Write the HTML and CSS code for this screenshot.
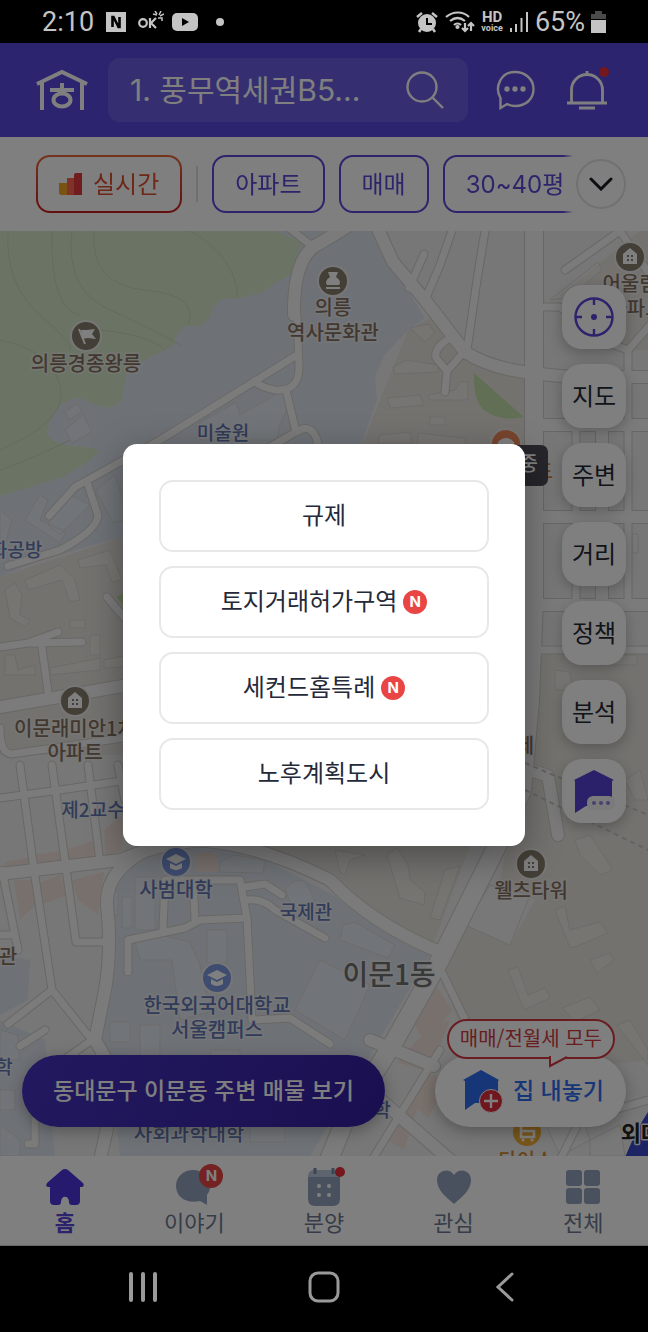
FILE: index.html
```html
<!DOCTYPE html>
<html lang="ko">
<head>
	<meta charset="UTF-8">
	<meta name="viewport" content="width=device-width, initial-scale=1">
	<title>이문동 지도</title>
	<link rel="stylesheet" href="styles.css">
</head>
<body>
	<div class="status">
		<div class="status-left">
			<span class="clock">2:10</span>
			<svg width="20" height="20" viewBox="0 0 20 20"><rect width="20" height="20" fill="#c4c4c4"/><path d="M6.500 15V5h1l5 10h1V5" fill="none" stroke="#000" stroke-width="2.600"/></svg>
			<svg class="ok" width="26" height="22" viewBox="0 0 26 22" fill="none" stroke="#c4c4c4" stroke-width="2.200"><circle cx="5" cy="12" r="3.800"/><path d="M12 7v10M18 7l-5 5 5 5"/><path d="M15 3l4 1M17 0l2 3M23 0l-2 4M26 3l-4 2M20 7h4v3" stroke-width="1.500"/></svg>
			<svg width="26" height="18" viewBox="0 0 26 18"><rect width="26" height="18" rx="5" fill="#c4c4c4"/><path d="M10 5v8l7-4z" fill="#000"/></svg>
			<i class="dot"></i>
		</div>
		<div class="status-right">
			<svg width="24" height="22" viewBox="0 0 24 22"><circle cx="12" cy="12" r="9" fill="#c4c4c4"/><path d="M2 6l5-4M22 6l-5-4M6 18l-2 3M18 18l2 3" stroke="#c4c4c4" stroke-width="2.500"/><path d="M12 7v6h5" fill="none" stroke="#000" stroke-width="2"/></svg>
			<svg width="30" height="22" viewBox="0 0 30 22" fill="none" stroke="#c4c4c4" stroke-width="2.200"><path d="M1 6c7-6 17-6 23 0M5 10c5-4 10-4 15 0M9 14c2-2 5-2 7 0M20 12v8M17 17l3 3 3-3M26 20v-8M23 15l3-3 3 3"/><circle cx="12.500" cy="16" r="1"/></svg>
			<span class="hd"><b>HD</b><small>voice</small></span>
			<svg width="20" height="20" viewBox="0 0 20 20" stroke="#c4c4c4" stroke-width="2"><path d="M2 20v-4M7 20v-8M12.500 20V6M18 20V0"/></svg>
			<span class="battery">65%</span>
			<svg width="15" height="22" viewBox="0 0 15 22"><path d="M4 0h7v3h4v5H0V3h4z" fill="#4b4b4b"/><path d="M0 9h15v13H0z" fill="#c4c4c4"/></svg>
		</div>
	</div>

	<div class="app">
		<header class="header">
			<a href="#" class="icon-link" aria-label="홈으로">
				<svg width="52" height="42" viewBox="0 0 52 42" fill="none" stroke="#fff" stroke-width="4"><path d="M1 15L26 3l25 12M6 13v28M46 13v28M26 14v6M14 21h24" /><ellipse cx="26" cy="31" rx="8.500" ry="6.500"/></svg>
			</a>
			<button class="search">
				<span>1. 풍무역세권B5...</span>
				<svg width="38" height="38" viewBox="0 0 38 38" fill="none" stroke="#fff" stroke-width="2.400"><circle cx="16" cy="16" r="14.500"/><path d="M26 26l11 11"/></svg>
			</button>
			<button class="icon-btn" aria-label="채팅">
				<svg width="40" height="40" viewBox="0 0 40 40" fill="none" stroke="#fff" stroke-width="2.400"><path d="M5.500 38V28C-1 17 6 2 20 2c10 0 18.500 7 18.500 17S31 36 20 36c-3 0-6-1-8-2z"/><g fill="#fff" stroke="none"><circle cx="12" cy="19" r="2.700"/><circle cx="20" cy="19" r="2.700"/><circle cx="28" cy="19" r="2.700"/></g></svg>
			</button>
			<button class="icon-btn bell" aria-label="알림">
				<svg width="40" height="40" viewBox="0 0 40 40" fill="none" stroke="#fff" stroke-width="2.800"><path d="M0 33h40M4.500 33V20a15.500 15.500 0 0 1 31 0v13M20 5V1M12 38h16"/></svg>
				<i class="red-dot"></i>
			</button>
		</header>

		<nav class="filters">
			<div class="chips">
				<button class="chip live">
					<svg width="24" height="24" viewBox="0 0 24 24"><path d="M0 11h8v12H2a2 2 0 0 1-2-2z" fill="#f5a523"/><path d="M8 6h8v17H8z" fill="#ff6650"/><path d="M15 3a2 2 0 0 1 2-2h6v22h-8z" fill="#e53a3a"/></svg>
					실시간
				</button>
				<i class="bar"></i>
				<button class="chip">아파트</button>
				<button class="chip">매매</button>
				<button class="chip">30~40평</button>
			</div>
			<button class="more" aria-label="필터 더보기">
				<svg width="24" height="14" viewBox="0 0 24 14" fill="none" stroke="#1a1c22" stroke-width="3" stroke-linecap="round"><path d="M2 2l10 10L22 2"/></svg>
			</button>
		</nav>

		<main class="map">
			<svg class="map-canvas" viewBox="0 231 648 925" preserveAspectRatio="xMidYMin slice">
				<defs>
					<g id="wide">
						<path d="M534 220V600L530 700L522 790L495 850L440 960L395 1040L345 1120L325 1170"/>
					</g>
					<g id="mid">
						<path d="M376 225L393 262L425 300L465 352Q490 368 530 373L570 377H650"/>
						<path d="M350 225L320 243Q293 255 294 315"/>
						<path d="M0 707L123 686M0 874L60 867L120 860Q170 840 205 841Q260 845 330 880Q370 922 435 950"/>
						<path d="M150 848Q105 870 107 905Q112 950 105 990L95 1040L118 1080L100 1160"/>
						<path d="M542 425H650M542 517H650M542 605H650M602 425V605"/>
						<path d="M525 768L548 776L558 835M434 1066L370 1040M352 1075L450 1160"/>
					</g>
					<g id="thin">
						<path d="M285 225L312 246M297 315L299 365Q300 392 275 390Q260 387 254 381M297 355L160 440L75 487L49 516M286 390L296 432L268 448M296 432Q315 420 319 450"/>
						<path d="M88 485L98 515Q98 530 60 550L8 566"/>
						<path d="M409 288L424 254M425 300L440 265L454 225M467 350L477 280L486 225"/>
						<path d="M463 353L447 371L436 358Q434 348 447 340M447 371L445 392"/>
						<path d="M542 307H560L600 340L628 350L650 325M565 270L620 231L650 275M628 350V605M576 425V605M542 650H650"/>
						<path d="M0 647L28 643L82 642M28 643L58 632M41 640L48 692M107 597L128 622M0 728Q0 754 12 754L123 738"/>
						<path d="M20 765L34 870L52 990L8 1024M52 990L92 1040L30 1084M52 765L76 942H108M88 765L100 862M118 765L125 800M0 798L60 790L128 780M2 870L18 950M0 935H15"/>
						<path d="M45 1030L20 1046M35 1090V1144L28 1144"/>
						<path d="M128 972V940L185 928L200 920L247 918M165 880L163 928M193 880L195 920M165 880H240L247 918L252 1020L290 1018L330 1044M245 887L265 884L282 895M247 900Q262 898 275 910L325 938"/>
						<path d="M440 968L470 1030L520 1060M648 1100L580 1120L560 1160M372 1160L440 1050"/>
					</g>
					<g id="pin-apt"><circle r="15"/><path d="M-7-3L0-9L7-3V7H-7z" fill="#fff" stroke="none"/><path d="M-3-2h2v2h-2zM1-2h2v2h-2zM-3 2h2v2h-2zM1 2h2v2h-2z" stroke="none"/></g>
					<g id="pin-school"><circle r="15"/><path d="M-10-3L0-8L10-3L0 2zM-6 1v5q6 4 12 0V1L0 4z" fill="#fff" stroke="none"/></g>
				</defs>

				<rect y="231" width="648" height="925" fill="#eeeeee"/>
				<!-- housing blocks -->
				<g fill="#e9e5df">
					<path d="M408 330L430 318L465 352L527 378V450H360zM0 577L123 537V755H0zM560 295L640 231H648V350H600z"/>
					<path d="M540 655L648 650V1060L560 1070L470 1050L442 980L465 925L510 945L535 900L500 880z"/>
					<path d="M240 846H470L432 948L370 915L330 880z"/>
				</g>
				<!-- campus -->
				<g fill="#dde4ee">
					<path d="M0 231H374L393 266L425 318L408 330L385 355L375 375L377 400L362 443L123 537L40 560L0 577z"/>
					<path d="M165 846Q112 868 110 905L114 940L100 1040L112 1080L120 1156H310L430 955L375 925L330 893L250 852z"/>
					<path d="M0 955L30 960L28 1000L0 1015zM0 1020L45 1040L55 1156H0z"/>
				</g>
				<!-- hills -->
				<path fill="#d7e8c8" d="M0 231H277L302 243L290 275L272 285L262 293L240 298L222 299L213 307L210 318L200 326H185L177 335L172 347L150 357L127 370L122 400Q110 412 95 405L78 397L62 404Q48 415 48 435Q55 446 85 447L100 450Q90 463 60 478L0 496z"/>
				<g fill="none" stroke="#c7d8b9" stroke-width="1">
					<path d="M8 231Q5 285 40 315T70 350M52 231Q50 310 80 315M72 231Q65 290 110 310T180 345M94 231Q90 285 145 290T188 325M190 231Q235 255 238 298M0 340Q50 350 60 385T0 450M100 330Q150 335 165 350M0 470Q30 460 70 440"/>
				</g>
				<path fill="#c3dfab" d="M474 373L524 417Q500 422 484 410Q473 400 474 373zM116 597L123 593V605z"/>
				<!-- shops -->
				<g fill="#f1e1d8">
					<path d="M5 862L60 852L55 864L5 870zM35 855L78 848L80 862L38 866zM65 850L95 840L97 858L68 862zM104 830L122 815V850L106 857zM14 880H38L40 900L20 920zM35 885L60 875L68 895L40 905zM72 880L104 872L98 915L78 900zM195 853L218 852V872H195z"/>
					<path d="M435 985L453 1010L425 1043L415 1025zM427 1030L450 1020L430 1072L397 1062zM405 1105L420 1100L404 1150L388 1140zM425 1072L450 1080L428 1118L410 1102z"/>
				</g>
				<!-- buildings -->
				<g class="buildings">
					<path d="M65 412L78 403L82 412L69 420zM65 430L83 415L92 432L72 443zM196 425L236 402L240 415L275 395L280 390L290 402L280 425L277 440H200z"/>
					<path d="M0 510L12 520L5 545H0zM25 520L40 495L48 500L40 520L66 532L60 543zM60 505L70 495L90 505L80 515L60 535L48 525zM96 490L115 475L123 500V520L113 523z"/>
					<path d="M25 580L60 565L75 580L80 600L70 602L62 580L28 590zM78 560L110 550L122 580L112 582L106 565L80 568zM5 590L15 583L22 595L20 615L30 620L25 627L10 618zM70 620H85V628H70zM90 635H100V655H90zM50 668L100 658V670L50 675zM104 660L123 656V667L104 668zM5 655H15L18 670L35 665V675H5z"/>
					<path d="M393 367L407 360L438 365V372L395 374zM387 398L420 395L424 405L390 408zM428 395L455 390L460 382H468V400H430zM430 417H445V425H430zM380 435L410 432L412 443H378zM418 433L465 438V445H418zM410 328L428 324L435 332L425 342z"/>
					<path d="M135 877H155V930H135zM110 895L118 890V915H110zM122 897H132V928H122zM220 862L235 855L265 860L263 873L220 872zM285 890Q300 870 310 890T305 910Q292 912 285 890z"/>
					<path d="M135 942L165 936L190 942L200 965L205 990L215 1010L180 1020L172 960L140 960zM207 930H227V963H207zM320 960L370 985L345 1040L295 1010zM343 925L355 922L395 945L388 958L340 940zM110 1022H130V1042H110zM140 1025H160V1060H140zM210 1050H240V1070H210z"/>
					<path d="M387 855L397 848L408 865L410 880L425 892L424 905L400 898zM335 850L365 855L350 860L345 875L340 872zM445 870L460 866L440 920L430 918zM490 885L530 895L510 945L465 925zM555 910L565 906L570 930L600 922L608 933L580 945L570 948z"/>
					<path d="M575 840L590 835L610 865L612 870L600 875L580 855zM508 970L518 967L528 995L545 988L550 998L524 1010zM562 1008L590 997L600 1010L575 1022zM617 1025L630 1020L648 1050V1065zM625 780L640 770L648 800H635zM590 960L610 953L614 960L597 973zM555 670L570 672L573 690H555zM600 655H637V665H600zM632 534H638V553H632zM620 245L648 258V275zM550 300L598 262L602 270L570 297z"/>
					<path d="M0 1030L18 1035L20 1060H0zM0 1090H15V1110H0zM0 1125L20 1140V1156H0zM250 1120L285 1125V1142H250zM545 1122L580 1110L590 1140L560 1156zM500 1080L530 1095L515 1120zM590 1140L620 1125L625 1156H590z"/>
				</g>

				<g class="casing">
					<use href="#thin" class="thin"/>
					<use href="#mid" class="mid"/>
					<use href="#wide" class="wide"/>
				</g>
				<g class="road">
					<use href="#thin" class="thin"/>
					<use href="#mid" class="mid"/>
					<use href="#wide" class="wide"/>
				</g>
				<path d="M525 763L648 815M525 790L648 850" fill="none" stroke="#c9c7c4" stroke-width="2" stroke-dasharray="5 4"/>
				<path d="M624 1160Q636 1130 648 1112V1160z" fill="#3a48c8"/>

				<g class="label brown">
					<text x="86" y="371">의릉경종왕릉</text>
					<text x="333" y="315">의릉</text>
					<text x="333" y="340">역사문화관</text>
					<text x="75" y="736">이문래미안1차</text>
					<text x="75" y="760">아파트</text>
					<text x="531" y="898">웰츠타워</text>
					<text x="630" y="291">어울림</text>
					<text x="636" y="316">아파트</text>
					<text x="525" y="753">제</text>
					<text x="8" y="964">관</text>
				</g>
				<g class="label blue">
					<text x="223" y="440">미술원</text>
					<text x="16" y="557">화공방</text>
					<text x="93" y="817">제2교수</text>
					<text x="306" y="919">국제관</text>
					<text x="4" y="1074">학</text>
					<text x="382" y="1117">학</text>
				</g>
				<g class="label blue big">
					<text x="176" y="897">사범대학</text>
					<text x="217" y="1013">한국외국어대학교</text>
					<text x="217" y="1037">서울캠퍼스</text>
					<text x="189" y="1141">사회과학대학</text>
				</g>
				<g class="label orange">
					<text x="544" y="479">드</text>
					<text x="526" y="1168">다이소</text>
				</g>
				<text class="label town" x="389" y="985">이문1동</text>
				<text class="label station" x="641" y="1141">외대</text>

				<g class="pin pin-brown">
					<g transform="translate(86 336)"><circle r="15"/><path d="M-7-7L-1 8" fill="none" stroke="#fff"/><path d="M-5-6h6l8-1-3 5 4 5-8-1-6 1z" fill="#fff" stroke="none"/></g>
					<g transform="translate(333 281)"><circle r="15"/><path d="M-5-9H5L3-4Q9 0 6 4H-6Q-9 0-3-4zM-7 6H7V8H-7z" fill="#fff" stroke="none"/></g>
					<use href="#pin-apt" x="75" y="701"/>
					<use href="#pin-apt" x="630" y="257"/>
					<use href="#pin-apt" x="531" y="864"/>
				</g>
				<g class="pin pin-blue">
					<use href="#pin-school" x="176" y="862"/>
					<use href="#pin-school" x="217" y="978"/>
				</g>
				<g class="pin pin-orange"><circle cx="506" cy="444" r="15"/><path d="M498 442q8-8 16 0v6h-16z" fill="#fff" stroke="none"/></g>
				<g class="pin pin-yellow"><circle cx="527" cy="1132" r="15"/><path d="M518 1123h3v14h13v-6h-12" fill="none" stroke="#fff" stroke-width="2.500"/><circle cx="523" cy="1140" r="1.500" fill="#fff" stroke="none"/><circle cx="532" cy="1140" r="1.500" fill="#fff" stroke="none"/></g>
				<rect x="464" y="445" width="84" height="41" rx="7" fill="#4b4b56"/>
				<text class="tip" x="538" y="471">분양중</text>
			</svg>

			<div class="side">
				<button aria-label="현재 위치"><svg width="40" height="40" viewBox="0 0 40 40" fill="none" stroke="#5a44d8" stroke-width="2.400"><circle cx="20" cy="20" r="18.500"/><path d="M20 2v6M20 32v6M2 20h6M32 20h6"/><circle cx="20" cy="20" r="3" fill="#5a44d8" stroke="none"/></svg></button>
				<button class="word">지도</button>
				<button class="word">주변</button>
				<button class="word">거리</button>
				<button class="word">정책</button>
				<button class="word">분석</button>
				<button aria-label="상담"><svg width="44" height="46" viewBox="0 0 44 46"><path d="M2 12L22 2l20 10-2 1v25H14L3 45V13z" fill="#5640d4"/><rect x="15" y="28" width="28" height="14" rx="6" fill="#f4f4fa"/><g fill="#8f84d8"><circle cx="22" cy="35" r="2"/><circle cx="29" cy="35" r="2"/><circle cx="36" cy="35" r="2"/></g></svg></button>
			</div>

			<div class="bottom">
				<button class="nearby">동대문구 이문동 주변 매물 보기</button>
				<div class="sell-wrap">
					<button class="sell">
						<svg width="40" height="44" viewBox="0 0 40 44"><path d="M0 11L18 1l18 10-1 1v22H12L2 41V12z" fill="#2f6df0"/><circle cx="28" cy="32" r="11.500" fill="#e02c3c" stroke="#fff" stroke-width="1"/><path d="M28 25v14M21 32h14" stroke="#fff" stroke-width="2.400"/></svg>
						<span>집 내놓기</span>
					</button>
					<div class="bubble">매매/전월세 모두<svg width="20" height="12" viewBox="0 0 20 12"><path d="M1 0v10L18 1" fill="#fff" stroke="#d53a40" stroke-width="2"/></svg></div>
				</div>
			</div>
		</main>

		<nav class="tabs">
			<a href="#" class="on">
				<svg width="40" height="38" viewBox="0 0 40 38"><path d="M17 2q3-2 6 0l15 13q2 3-1 4h-2v14q0 4-4 4h-4q-3 0-3-3c0-7-8-7-8 0q0 3-3 3H9q-4 0-4-4V19H3q-3-1-1-4z" fill="#4a35dc"/></svg>
				홈
			</a>
			<a href="#">
				<svg width="40" height="38" viewBox="0 0 40 38"><path d="M19 2c10 0 17 7 17 16 0 4-1 6-3 9v10l-7-4C12 36 2 29 2 18 2 9 9 2 19 2z" fill="#94a3bc"/></svg>
				이야기
				<i class="new">N</i>
			</a>
			<a href="#">
				<svg width="40" height="38" viewBox="0 0 40 38"><path d="M4 9q0-7 6-7h20q6 0 6 7z" fill="#bac8da"/><path d="M4 9h32v22q0 7-7 7H11q-7 0-7-7z" fill="#94a3bc"/><path d="M11 0v6M29 0v6" stroke="#788aa8" stroke-width="3"/><g fill="#fff"><circle cx="15" cy="18" r="2"/><circle cx="25" cy="18" r="2"/><circle cx="15" cy="27" r="2"/><circle cx="25" cy="27" r="2"/></g></svg>
				분양
				<i class="red-dot"></i>
			</a>
			<a href="#">
				<svg width="40" height="38" viewBox="0 0 40 38"><path d="M20 36C12 29 3 22 3 12 3 2 15-1 20 7 25-1 37 2 37 12c0 10-9 17-17 24z" fill="#94a3bc"/></svg>
				관심
			</a>
			<a href="#">
				<svg width="40" height="38" viewBox="0 0 40 38" fill="#94a3bc"><rect x="3" y="2" width="16" height="16" rx="3"/><rect x="21" y="2" width="16" height="16" rx="3"/><rect x="3" y="20" width="16" height="16" rx="3"/><rect x="21" y="20" width="16" height="16" rx="3"/></svg>
				전체
			</a>
		</nav>

		<div class="overlay">
			<div class="modal" role="dialog" aria-label="정책">
				<button>규제</button>
				<button>토지거래허가구역 <i class="new">N</i></button>
				<button>세컨드홈특례 <i class="new">N</i></button>
				<button>노후계획도시</button>
			</div>
		</div>
	</div>

	<div class="sysnav">
		<button aria-label="최근 앱"><svg width="30" height="32" viewBox="0 0 30 32" stroke="#9a9a9a" stroke-width="4" stroke-linecap="round"><path d="M3 3v26M15 3v26M27 3v26"/></svg></button>
		<button aria-label="홈 화면"><svg width="32" height="32" viewBox="0 0 32 32" fill="none" stroke="#9a9a9a" stroke-width="3"><rect x="2" y="2" width="28" height="28" rx="8"/></svg></button>
		<button aria-label="뒤로"><svg width="20" height="32" viewBox="0 0 20 32" fill="none" stroke="#9a9a9a" stroke-width="3" stroke-linecap="round"><path d="M17 3L3 16l14 13"/></svg></button>
	</div>
</body>
</html>
```
FILE: styles.css
```css
*{margin:0;padding:0;box-sizing:border-box;}
body{min-height:100vh;display:flex;flex-direction:column;background:#000;font-family:"Noto Sans CJK KR",sans-serif;}
button{border:0;background:none;font:inherit;color:inherit;cursor:pointer;}
a{color:inherit;text-decoration:none;}
i{font-style:normal;}
svg{display:block;flex:none;}

/* phone status bar */
.status{height:43px;padding:0 42px;display:flex;justify-content:space-between;align-items:center;color:#c4c4c4;font-family:Roboto,sans-serif;}
.status-left,.status-right{display:flex;align-items:center;}
.status-left{gap:12px;}
.status-right{gap:6px;}
.clock,.battery{font-size:27px;line-height:32px;}
.ok{margin-right:-4px;}
.dot{width:8px;height:8px;margin-left:6px;border-radius:50%;background:#c4c4c4;}
.hd{display:flex;flex-direction:column;align-items:center;}
.hd b{font-size:15px;line-height:13px;}
.hd small{font-size:9px;line-height:9px;font-weight:bold;}

.app{flex:1;display:flex;flex-direction:column;position:relative;background:#fff;}
.header{height:94px;padding:0 41px 0 36px;display:flex;align-items:center;background:#5a48e0;}
.search{flex:1;min-width:0;height:64px;margin:0 27px 0 20px;padding:0 24px 0 22px;display:flex;justify-content:space-between;align-items:center;border-radius:12px;background:#6a5de2;color:#fff;font-family:Inter,"Noto Sans CJK KR",sans-serif;font-size:30px;line-height:40px;white-space:nowrap;}
.icon-btn{position:relative;}
.bell{margin-left:32px;}
.red-dot{position:absolute;width:10px;height:10px;border-radius:50%;background:#e8303a;}
.bell .red-dot{right:-2px;top:-3px;}

.filters{height:94px;padding:0 22px 0 36px;display:flex;align-items:center;}
.chips{flex:1;min-width:0;display:flex;align-items:center;overflow:hidden;margin-right:3px;-webkit-mask-image:linear-gradient(to left,transparent,#000 10px);mask-image:linear-gradient(to left,transparent,#000 10px);}
.chip{flex:none;height:58px;margin-right:14px;padding:0 21px 4px;display:flex;align-items:center;border:2px solid #5a48d8;border-radius:14px;color:#5a48d8;font-family:Inter,"Noto Sans CJK KR",sans-serif;font-size:24px;}
.live{gap:10px;border-color:transparent;background:linear-gradient(#fff,#fff) padding-box,linear-gradient(#e8693a,#c81e1e) border-box;color:#dc5030;}
.live svg{margin-top:4px;}
.bar{flex:none;width:2px;height:36px;margin-right:14px;background:#dedede;}
.more{flex:none;width:50px;height:50px;display:flex;align-items:center;justify-content:center;border:2px solid #e0e2e4;border-radius:50%;}

.map{flex:1;min-height:600px;position:relative;overflow:hidden;}
.map-canvas{position:absolute;top:0;left:0;width:100%;height:100%;}
.thin{stroke-width:7px;}
.mid{stroke-width:12px;}
.wide{stroke-width:18px;}
.road,.casing{fill:none;stroke-linejoin:round;stroke-linecap:round;}
.road{stroke:#f6f6f6;}
.casing{stroke:#d0cecb;}
.casing .thin{stroke-width:9px;}
.casing .mid{stroke-width:14px;}
.casing .wide{stroke-width:20px;}
.buildings{fill:#fff;fill-opacity:.2;stroke:#dad7d3;stroke-width:1px;}
.label{font-size:20px;font-weight:500;text-anchor:middle;paint-order:stroke;stroke:#f0f0f0;stroke-opacity:.7;stroke-width:3px;stroke-linejoin:round;}
.brown{fill:#86705f;}
.blue{fill:#6276b4;font-size:19px;}
.big{font-size:20px;}
.orange{fill:#d08a30;}
.town{fill:#707070;font-size:28px;}
.station{fill:#222;font-size:22px;font-weight:bold;stroke-opacity:1;}
.pin{stroke:#ededed;stroke-width:2px;}
.pin-brown{fill:#877e6e;}
.pin-blue{fill:#7c98e0;}
.pin-orange{fill:#f08a5c;}
.pin-yellow{fill:#f0ac34;}
.tip{fill:#fff;font-size:20px;font-weight:500;text-anchor:end;}

.side{position:absolute;top:54px;right:22px;display:flex;flex-direction:column;gap:15px;}
.side button{width:64px;height:64px;display:flex;align-items:center;justify-content:center;border-radius:20px;background:#fff;box-shadow:0 4px 14px rgba(0,0,0,.25);color:#252833;font-size:24px;}
.side .word{padding-bottom:4px;}
.bottom{position:absolute;left:22px;right:22px;bottom:29px;display:flex;justify-content:space-between;}
.nearby,.sell{height:72px;border-radius:36px;font-size:23px;font-weight:500;box-shadow:0 4px 16px rgba(0,0,0,.3);white-space:nowrap;}
.nearby{padding:0 31px 4px;background:linear-gradient(120deg,#4632c0,#3420a0);color:#fff;}
.sell-wrap{position:relative;}
.sell{display:flex;align-items:center;gap:10px;padding:0 22px 0 28px;background:#fff;color:#2f6df0;}
.sell span{padding-bottom:4px;}
.bubble{position:absolute;right:11px;bottom:68px;height:40px;padding:0 11px;border:2px solid #d53a40;border-radius:20px;background:#fff;color:#d53a40;font-size:20px;line-height:34px;white-space:nowrap;}
.bubble svg{position:absolute;left:100px;top:35px;}

.tabs{height:90px;display:flex;border-bottom:1px solid #d0d0d0;}
.tabs a{flex:1;position:relative;padding-top:12px;display:flex;flex-direction:column;align-items:center;color:#6c7a90;font-size:22px;line-height:31px;}
.tabs .on{color:#5a44d8;font-weight:bold;}
.new{display:inline-flex;align-items:center;justify-content:center;width:24px;height:24px;border-radius:50%;background:#ea4545;color:#fff;font:bold 15px/24px Inter,sans-serif;}
.tabs .new{position:absolute;top:8px;left:calc(50% + 5px);}
.tabs .red-dot{top:11px;left:calc(50% + 11px);}

.overlay{position:absolute;top:0;right:0;bottom:0;left:0;display:flex;align-items:center;justify-content:center;background:rgba(0,0,0,.5);}
.modal{width:62%;padding:36px;display:flex;flex-direction:column;gap:14px;border-radius:14px;background:#fff;box-shadow:0 10px 36px rgba(0,0,0,.35);}
.modal button{height:72px;padding-bottom:4px;display:flex;align-items:center;justify-content:center;gap:6px;border:2px solid #e6e8ea;border-radius:14px;color:#252a3a;font-size:24px;}
.modal .new{margin-top:4px;}

.sysnav{height:86px;padding:0 52px 4px;display:flex;}
.sysnav button{flex:1;display:flex;align-items:center;justify-content:center;}
```
